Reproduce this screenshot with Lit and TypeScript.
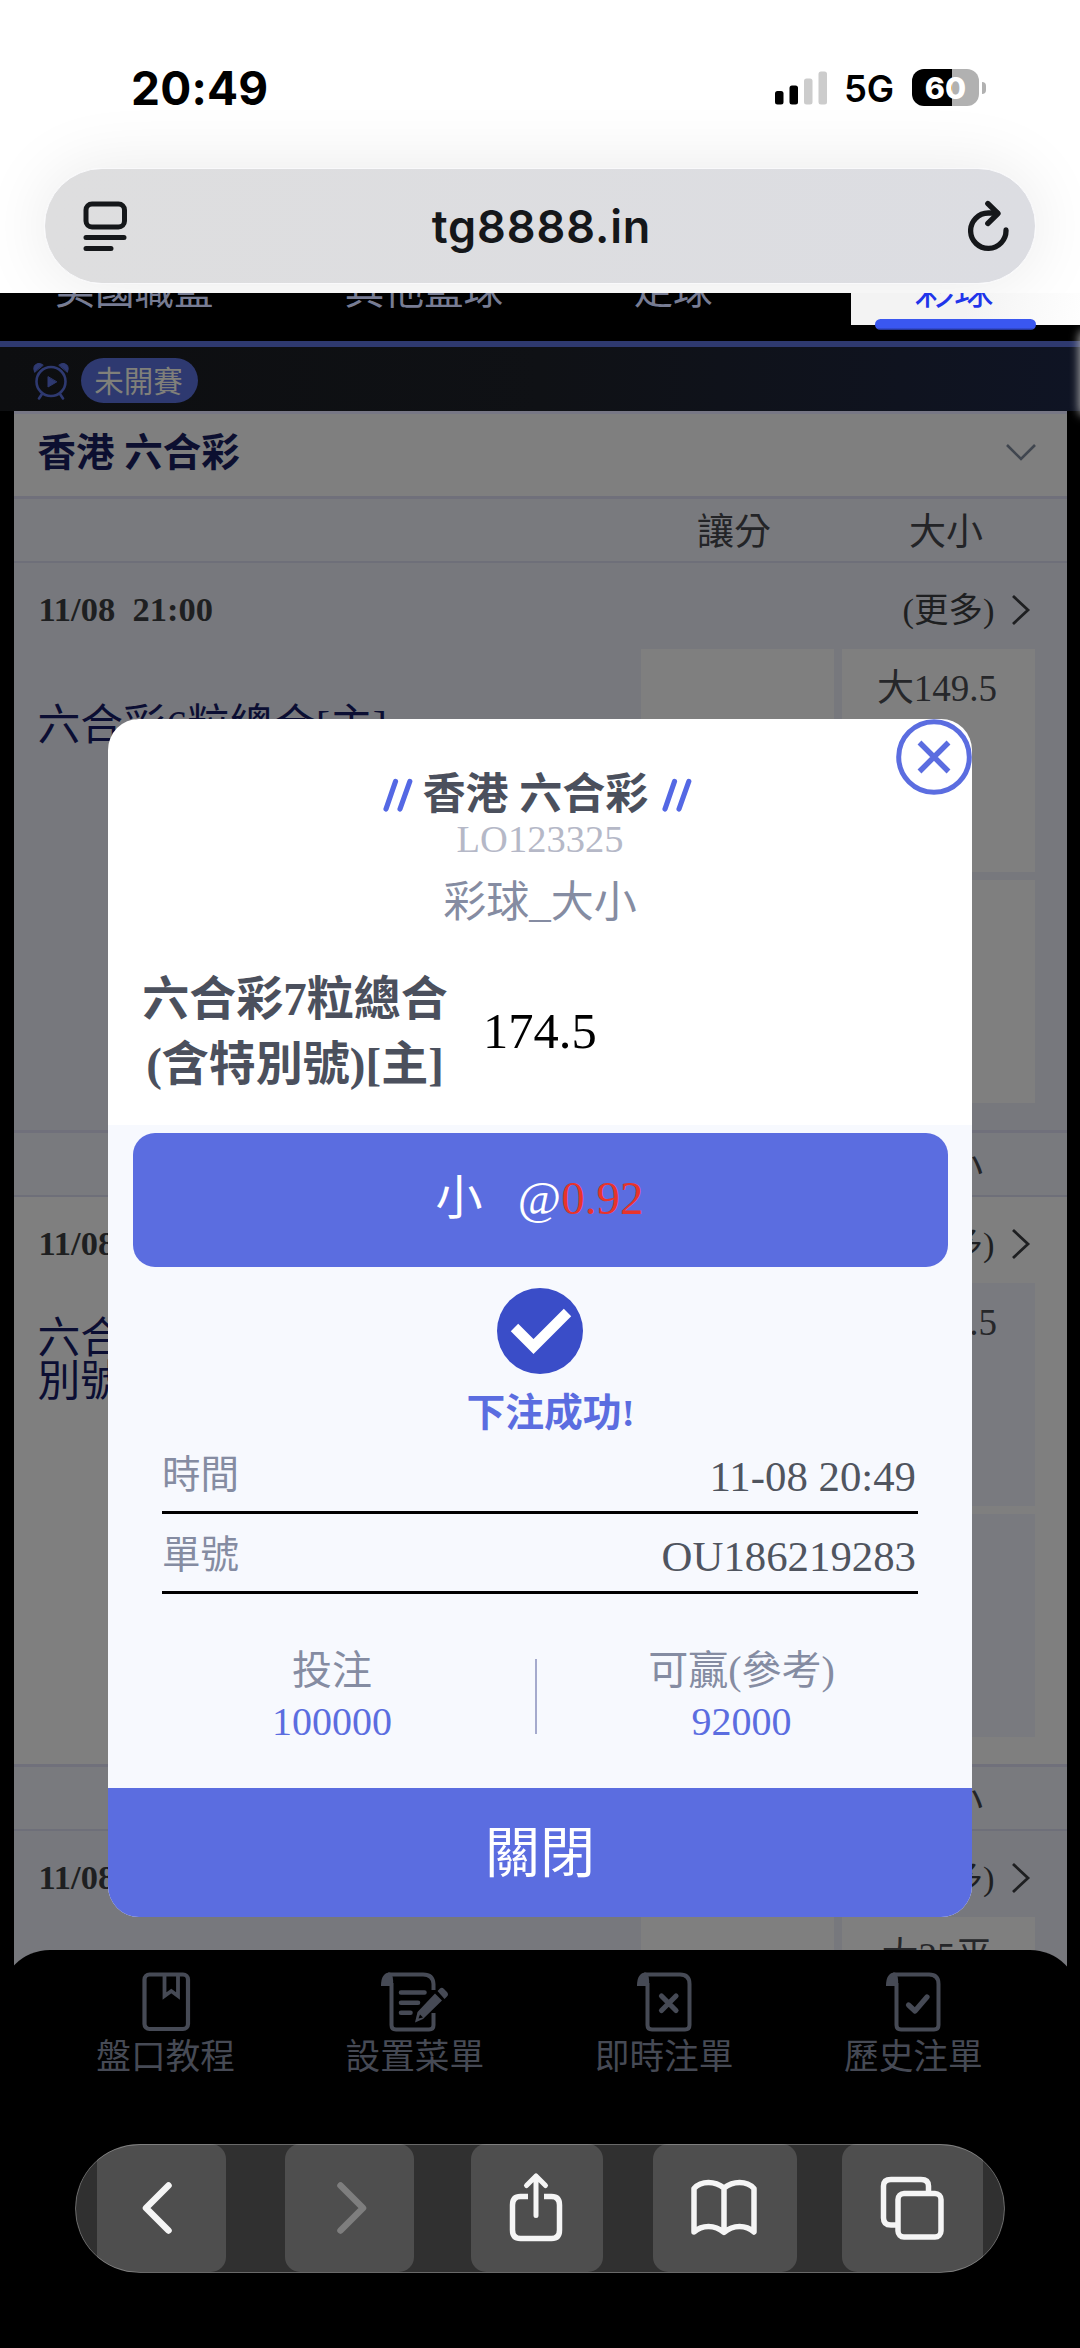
import { LitElement, html, css } from "lit";
import { customElement, property } from "lit/decorators.js";

const tabIcons: Record<string, unknown> = {
  guide: html`<svg width="68" height="62" viewBox="-10 0 68 62" fill="none" stroke="#464a55" stroke-width="4.200"><rect x="2.500" y="3.500" width="43.500" height="54.500" rx="5"/><path d="M22.500 4 V25 L29.300 20 L36 25 V4" stroke-width="3.800"/></svg>`,
  setup: html`<svg width="68" height="62" viewBox="0 0 68 62" fill="none"><path d="M0 15 Q0 1.500 9 1.500 Q13 4 12 15 Z" fill="#464a55"/><path d="M7 3.500 H42 Q52 3.500 52.500 13 V19 M52.500 42 V54 Q52.500 58.500 48 58.500 H15 Q10.500 58.500 10.500 54 V12" stroke="#464a55" stroke-width="4"/><path d="M20 21.500 H43.500 M20 31.800 H37 M20 41.800 H29.500" stroke="#464a55" stroke-width="4.600" stroke-linecap="round"/><path d="M54 22.500 L61 29.500 L42 48 L34 51.500 L36.500 41 Z M56.500 20 L59 17.500 Q61 16 63 18 L66 21 Q68 23.500 66 25.500 L63.500 28 Z" fill="#464a55"/><path d="M37.500 47.500 L39 43.500 L42 46.500 Z" fill="#000"/></svg>`,
  live: html`<svg width="68" height="62" viewBox="-7 0 68 62" fill="none"><path d="M0 15 Q0 1.500 9 1.500 Q13 4 12 15 Z" fill="#464a55"/><path d="M7 3.500 H43 Q52.500 3.500 52.500 13 V54 Q52.500 58.500 48 58.500 H15 Q10.500 58.500 10.500 54 V12" stroke="#464a55" stroke-width="4"/><path d="M24.500 25 L39 39.500 M39 25 L24.500 39.500" stroke="#464a55" stroke-width="5.200" stroke-linecap="round"/></svg>`,
  past: html`<svg width="68" height="62" viewBox="-7 0 68 62" fill="none"><path d="M0 15 Q0 1.500 9 1.500 Q13 4 12 15 Z" fill="#464a55"/><path d="M7 3.500 H43 Q52.500 3.500 52.500 13 V54 Q52.500 58.500 48 58.500 H15 Q10.500 58.500 10.500 54 V12" stroke="#464a55" stroke-width="4"/><path d="M22.500 34 L29 40 L41 26" stroke="#464a55" stroke-width="5.200" stroke-linecap="round" stroke-linejoin="round"/></svg>`,
};

@customElement("status-bar")
class StatusBar extends LitElement {
  static styles = css`
    :host { display: flex; justify-content: space-between; align-items: center; height: 36px; padding: 70px 94px 62px 131px; font-family: Inter, "Liberation Sans", sans-serif; color: #000; }
    .time { font-size: 46px; font-weight: 700; line-height: 36px; letter-spacing: 0.2px; margin-top: -1px; }
    .right { display: flex; align-items: center; }
    .net { font-size: 36.500px; font-weight: 600; line-height: 36px; margin: 2px 0 0 17px; width: 68px; letter-spacing: -0.1px; }
    .battery { display: flex; align-items: center; gap: 3px; margin-top: -1px; }
    .cell { width: 67px; height: 37px; border-radius: 12px; background: linear-gradient(90deg, #000 0 40px, #b1b1b1 40px); color: #fff; font-size: 30.500px; font-weight: 800; line-height: 37px; text-align: center; letter-spacing: 0; }
    .nub { width: 4px; height: 12px; border-radius: 0 4px 4px 0; background: #b1b1b1; }
  `;
  render() {
    return html`<div class="time">20:49</div>
      <div class="right">
        <svg width="52" height="34" viewBox="0 0 52 34"><rect x="0" y="20" width="8.500" height="13.500" rx="2.500"/><rect x="14.500" y="14.500" width="8.500" height="19" rx="2.500"/><rect x="29" y="7.500" width="8.500" height="26" rx="2.500" fill="#ccc"/><rect x="43.500" y="0.500" width="8.500" height="33" rx="2.500" fill="#ccc"/></svg>
        <div class="net">5G</div>
        <div class="battery"><div class="cell">60</div><div class="nub"></div></div>
      </div>`;
  }
}

@customElement("address-bar")
class AddressBar extends LitElement {
  static styles = css`
    :host { display: block; height: 125px; padding: 0 44px; }
    .pill { display: flex; align-items: center; justify-content: space-between; box-sizing: border-box; height: 116px; padding: 1px 25px 0 38px; border: 1.500px solid #f9f9fb; border-radius: 58px; background: linear-gradient(90deg, #dededf, #dcdde2); box-shadow: 0 0 70px rgba(0, 0, 0, 0.09); }
    .url { font: 600 45px/60px Inter, "Liberation Sans", sans-serif; letter-spacing: 0.9px; color: #15171a; margin-right: 14px; }
  `;
  render() {
    return html`<div class="pill">
      <svg width="46" height="52" viewBox="0 0 46 52" fill="none" stroke="#15171a" stroke-width="5" stroke-linecap="round"><rect x="3" y="3" width="38.500" height="23" rx="6"/><path d="M3 36.500 H41 M3 47.500 H28"/></svg>
      <div class="url">tg8888.in</div>
      <svg width="42" height="54" viewBox="0 0 42 54" fill="none" stroke="#15171a" stroke-width="5.300" stroke-linecap="round" stroke-linejoin="round"><path d="M38 30 A17.700 17.700 0 1 1 20.300 13 H29"/><path d="M19.800 3.500 L30 13.500 L19.800 23.500"/></svg>
    </div>`;
  }
}

@customElement("match-section")
class MatchSection extends LitElement {
  @property({ type: Boolean, reflect: true }) plain = false;
  @property({ type: Array }) team: string[] = [];
  @property() line = "";
  static styles = css`
    :host { display: block; height: 634px; font-family: "Liberation Serif", "Noto Sans CJK TC", serif; background: #77787d; --cell: #7f7f7f; }
    :host([plain]) { background: #7f7f7f; --cell: #797a7f; }
    .cols { display: flex; justify-content: flex-end; box-sizing: border-box; height: 67px; padding: 1px 20px 0 0; border-top: 3px solid #70707b; border-bottom: 2.500px solid #6e6f79; background: #797a7e; }
    .col { width: 201px; text-align: center; font-size: 37px; line-height: 65px; color: #232427; }
    .first { width: 223px; }
    .top { display: flex; justify-content: space-between; height: 79px; padding: 7px 36px 0 25px; font-size: 34.500px; line-height: 78px; color: #1e1f21; }
    .date { font-weight: 700; white-space: pre; }
    .more { display: flex; align-items: center; gap: 16px; }
    .row { display: flex; justify-content: space-between; padding: 0 32px 0 24px; }
    .team { display: flex; flex-direction: column; justify-content: center; height: 153px; font-size: 42.800px; line-height: 43px; color: #0b0e33; white-space: nowrap; }
    .grid { display: grid; grid-template-columns: 193px 193px; grid-auto-rows: 223px; gap: 8px; }
    .cell { box-sizing: border-box; padding-right: 2px; background: var(--cell); text-align: center; font-size: 37px; line-height: 79px; color: #26272a; }
  `;
  render() {
    return html`<div class="cols"><div class="col first">讓分</div><div class="col">大小</div></div>
      <div class="top"><div class="date">11/08  21:00</div>
        <div class="more"><span>(更多)</span><svg width="20" height="32" viewBox="0 0 20 32" fill="none" stroke="#1e1f21" stroke-width="2.800"><path d="M2 2 L17 16 L2 30"/></svg></div></div>
      <div class="row"><div class="team">${this.team.map((t) => html`<div>${t}</div>`)}</div>
        <div class="grid"><div class="cell"></div><div class="cell">${this.line}</div><div class="cell"></div><div class="cell"></div></div></div>`;
  }
}

@customElement("bet-dialog")
class BetDialog extends LitElement {
  static styles = css`
    :host { display: block; box-sizing: border-box; width: 864px; height: 1198px; border-radius: 31px; overflow: hidden; background: #fff; position: relative; text-align: center; font-family: "Liberation Serif", "Noto Sans CJK TC", serif; }
    .close { position: absolute; top: 0; right: 0; }
    .head { height: 354px; padding-top: 52px; }
    .title { display: flex; justify-content: center; align-items: center; gap: 10px; height: 48px; font-size: 43px; font-weight: 700; line-height: 48px; color: #4b505d; padding-right: 5px; }
    .title span { margin-right: 4px; }
    .code { font-size: 38.500px; line-height: 40px; color: #b5b8c7; }
    .kind { font-size: 43px; line-height: 87px; height: 86px; color: #858ca2; }
    .pick { display: flex; align-items: center; margin: 22px 0 0 34px; }
    .team { width: 306px; font-size: 47px; font-weight: 700; line-height: 65px; color: #4b505d; white-space: nowrap; }
    .line { margin-left: 35px; font-size: 50.500px; color: #000; line-height: 60px; margin-top: -2px; }
    .body { height: 655px; padding: 8px 0 0; background: #f7f9fe; }
    .odds { display: flex; justify-content: center; box-sizing: border-box; margin: 0 24.500px; height: 133.500px; border-radius: 22px; background: #5b6de0; color: #fff; font-size: 47px; line-height: 130px; padding-right: 1px; white-space: pre; }
    .price { color: #e8342b; }
    .tick { display: block; margin: 21.500px auto 15px; }
    .ok { font-size: 38.800px; font-weight: 700; line-height: 48px; color: #5b6de0; padding-left: 21px; }
    .info { margin: 0 54px; }
    .item { display: flex; justify-content: space-between; box-sizing: border-box; height: 80px; padding: 7px 2px 0 0; border-bottom: 3px solid #000; line-height: 71px; font-size: 42.800px; color: #50555f; }
    .item:first-child { height: 77px; padding-top: 4px; }
    .name { font-size: 38.500px; color: #858ca2; line-height: 68px; }
    .totals { display: flex; margin: 52px 0 0 18px; }
    .total { width: 409px; font-size: 40px; color: #858ca2; line-height: 50px; }
    .stake { box-sizing: border-box; padding-left: 3px; }
    .rule { width: 2px; height: 75px; margin-top: 13px; background: #a5aacd; }
    .amount { color: #5b6de0; line-height: 51px; }
    .foot { height: 129px; background: #5b6de0; color: #fff; font-size: 55px; line-height: 132px; }
  `;
  render() {
    const slashes = html`<svg width="30" height="34" viewBox="0 0 30 34" stroke="#5468e4" stroke-width="5.200" stroke-linecap="round"><path d="M3 31 L12.500 3.500 M17 31 L26.800 3.500"/></svg>`;
    return html`<svg class="close" width="76" height="76" viewBox="0 0 76 76" fill="none" stroke="#5b6de0" stroke-width="5"><circle cx="38" cy="38" r="35.300"/><path d="M23.500 23.500 L52.500 52.500 M52.500 23.500 L23.500 52.500" stroke-width="5.500"/></svg>
      <div class="head">
        <div class="title">${slashes}<span>香港 六合彩</span>${slashes}</div>
        <div class="code">LO123325</div>
        <div class="kind">彩球_大小</div>
        <div class="pick"><div class="team">六合彩7粒總合<br>(含特別號)[主]</div><div class="line">174.5</div></div>
      </div>
      <div class="body">
        <div class="odds"><span>小   @</span><span class="price">0.92</span></div>
        <svg class="tick" width="86" height="86" viewBox="0 0 86 86"><circle cx="43" cy="43" r="43" fill="#3a4dc8"/><path d="M17.500 39.500 L36.500 58.500 L70.500 24.500" fill="none" stroke="#fff" stroke-width="10.500"/></svg>
        <div class="ok">下注成功!</div>
        <div class="info">
          <div class="item"><span class="name">時間</span><span>11-08 20:49</span></div>
          <div class="item"><span class="name">單號</span><span>OU186219283</span></div>
        </div>
        <div class="totals">
          <div class="total stake">投注<div class="amount">100000</div></div>
          <div class="rule"></div>
          <div class="total">可贏(參考)<div class="amount">92000</div></div>
        </div>
      </div>
      <div class="foot">關閉</div>`;
  }
}

@customElement("app-tabs")
class AppTabs extends LitElement {
  static styles = css`
    :host { display: flex; box-sizing: border-box; height: 194px; padding: 21px 42px 0 41px; }
    .tab { flex: 1; display: flex; flex-direction: column; align-items: center; font: 34.700px/43px "Noto Sans CJK TC", sans-serif; color: #464a55; }
    .tab svg { flex: none; }
  `;
  render() {
    const tabs = [["guide", "盤口教程"], ["setup", "設置菜單"], ["live", "即時注單"], ["past", "歷史注單"]];
    return html`${tabs.map(([i, t]) => html`<div class="tab">${tabIcons[i]}<span>${t}</span></div>`)}`;
  }
}

@customElement("browser-toolbar")
class BrowserToolbar extends LitElement {
  static styles = css`
    :host { display: block; padding: 0 75px; }
    .bar { position: relative; display: flex; box-sizing: border-box; height: 128.500px; padding-left: 22px; border-radius: 65px; overflow: hidden; background: #303030; }
    .bar::after { content: ""; position: absolute; inset: 0; border: 1.500px solid rgba(255, 255, 255, 0.28); border-radius: 65px; }
    .btn { flex: none; display: flex; justify-content: center; align-items: center; height: 128px; background: #4e4e4e; border-radius: 15px; }
    .back { width: 129px; margin-right: 59px; border-radius: 0 15px 15px 0; }
    .next { width: 128.500px; margin-right: 57.500px; }
    .share { width: 131.500px; margin-right: 50px; }
    .book { width: 144px; margin-right: 45px; }
    .tabs { width: 141px; border-radius: 15px 0 0 15px; }
    svg { fill: none; stroke: #f5f5f5; stroke-width: 6; stroke-linecap: round; stroke-linejoin: round; margin-right: 1px; }
    .back svg { margin-right: 9px; }
    .next svg { stroke: #7e7e7e; margin: 0 0 0 6px; }
    .share svg { margin-bottom: 2px; }
    .tabs svg { margin-right: 0; }
  `;
  render() {
    return html`<div class="bar">
      <div class="btn back"><svg width="32" height="54" viewBox="0 0 32 54"><path d="M27.500 4.500 L5 27 L27.500 49.500" stroke-width="6.500"/></svg></div>
      <div class="btn next"><svg width="32" height="54" viewBox="0 0 32 54"><path d="M4.500 4.500 L27 27 L4.500 49.500" stroke-width="6.500"/></svg></div>
      <div class="btn share"><svg width="56" height="72" viewBox="0 0 56 72"><path d="M20 25.500 H12.500 Q4.500 25.500 4.500 34 V59 Q4.500 67.500 12.500 67.500 H43.500 Q51.500 67.500 51.500 59 V34 Q51.500 25.500 43.500 25.500 H36" stroke-linecap="butt" stroke-width="5.500"/><path d="M28 44.500 V5 M18.500 14.500 L28 5 L37.500 14.500" stroke-width="5"/></svg></div>
      <div class="btn book"><svg width="68" height="58" viewBox="0 0 68 58"><path d="M34 9 Q27 3.500 18.500 3.500 Q9.500 3.500 4 9.500 V53 Q10 47.500 18.500 47.500 Q27 47.500 34 53.500 Q41 47.500 49.500 47.500 Q58 47.500 64 53 V9.500 Q58.500 3.500 49.500 3.500 Q41 3.500 34 9 V53" stroke-width="5.500"/></svg></div>
      <div class="btn tabs"><svg width="66" height="66" viewBox="0 0 66 66"><path d="M18 50 H12 Q4.500 50 4.500 43 V11 Q4.500 4.500 12 4.500 H42 Q49.500 4.500 49.500 11 V18" stroke-width="5.500" stroke-linecap="butt"/><rect x="19" y="18.500" width="43" height="43.500" rx="6" stroke-width="5.500"/></svg></div>
    </div>`;
  }
}

@customElement("app-root")
class AppRoot extends LitElement {
  static styles = css`
    :host { display: block; position: relative; width: 1080px; height: 2348px; overflow: hidden; background: #000; font-family: "Liberation Serif", "Noto Sans CJK TC", serif; }
    .chrome { height: 293px; overflow: hidden; background: #fff; }
    .sports { display: flex; height: 48px; overflow: hidden; font: 39.600px/58px "Noto Sans CJK TC", sans-serif; color: #777c93; }
    .sport { margin-top: -35px; height: 58px; flex: none; text-align: center; }
    .s1 { width: 269px; }
    .s2 { width: 310px; }
    .s3 { width: 188px; }
    .gap { width: 84px; flex: none; }
    .active { width: 229px; height: 32px; flex: none; background: linear-gradient(100deg, #f3f3f3 50%, #fefefe); color: #1f35ea; position: relative; }
    .active .sport { margin-left: -22px; width: 250px; clip-path: inset(35px 0 0 0); }
    .mark { position: absolute; left: 24px; top: 26px; width: 161px; height: 11px; border-radius: 6px; background: linear-gradient(#3a57f0 80%, #202d80); }
    .status { display: flex; align-items: center; box-sizing: border-box; height: 70px; padding: 3px 0 0 33px; gap: 12px; border-top: 6px solid #2e396f; background: linear-gradient(90deg, #0d0e10, #0f1115 50%, #0f1424); position: relative; }
    .glow { position: absolute; right: -12px; top: -16px; width: 12px; height: 84px; border-radius: 20px; box-shadow: 0 0 10px 1px #aaa; }
    .badge { box-sizing: border-box; height: 45px; width: 117px; padding-right: 2px; border-radius: 23px; background: #2e3970; color: #80807a; font: 29.500px/43px "Noto Sans CJK TC", sans-serif; text-align: center; }
    .list { margin: 0 14px 0 13.500px; width: 1053px; }
    .league { display: flex; justify-content: space-between; align-items: center; box-sizing: border-box; height: 85px; border-top: 3px solid #777785; background: #7f7f7f; padding: 0 30px 5px 24px; font-size: 38.500px; font-weight: 700; line-height: 60px; color: #0c0f30; }
    .overlay { position: absolute; left: 108px; top: 719px; }
    .bottom { position: absolute; left: 0; right: 0; top: 1950px; height: 398px; border-radius: 50px 50px 0 0; background: #000; }
  `;
  render() {
    return html`<div class="chrome"><status-bar></status-bar><address-bar></address-bar></div>
      <div class="sports">
        <div class="sport s1">美國職籃</div><div class="sport s2">其他籃球</div><div class="sport s3">足球</div><div class="gap"></div>
        <div class="active"><div class="sport">彩球</div><div class="mark"></div></div>
      </div>
      <div class="status">
        <svg width="36" height="38" viewBox="0 0 36 38" fill="none" stroke="#2e3970" stroke-width="2.600" stroke-linecap="round"><circle cx="18" cy="19.500" r="14.500"/><path d="M9 32 L6 36.500 M27 32 L30 36.500"/><path d="M1.500 10 Q-1 3 5 1.500 Q8 1 10 3 Z M34.500 10 Q37 3 31 1.500 Q28 1 26 3 Z M15 15 V25 L23.500 20 Z" fill="#2e3970" stroke-width="1"/></svg>
        <div class="badge">未開賽</div>
        <div class="glow"></div>
      </div>
      <div class="list">
        <div class="league"><span>香港 六合彩</span><svg width="32" height="20" viewBox="0 0 32 20" fill="none" stroke="#40464f" stroke-width="2.600"><path d="M2 2 L16 16 L30 2"/></svg></div>
        <match-section .team=${["六合彩6粒總合[主]"]} .line=${"大149.5"}></match-section>
        <match-section plain .team=${["六合彩7粒總合(含特", "別號)[主]"]} .line=${"大174.5"}></match-section>
        <match-section .team=${["六合彩特別號大小", "[主]"]} .line=${"大25平"}></match-section>
      </div>
      <bet-dialog class="overlay"></bet-dialog>
      <div class="bottom"><app-tabs></app-tabs><browser-toolbar></browser-toolbar></div>`;
  }
}
